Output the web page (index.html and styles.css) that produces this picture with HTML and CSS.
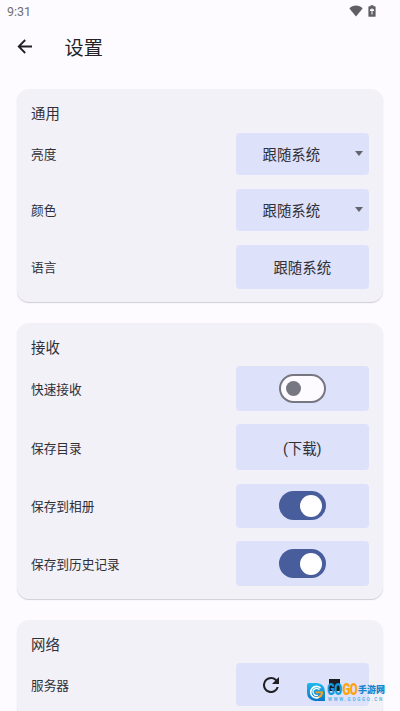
FILE: index.html
```html
<!DOCTYPE html>
<html lang="zh-CN">
<head>
<meta charset="utf-8">
<title>设置</title>
<link rel="stylesheet" href="styles.css">
</head>
<body>
<div class="status">
  <span>9:31</span>
  <div class="status-icons">
    <svg width="14" height="12" viewBox="0 0 14 12"><path d="M7 11.6 0.4 3.4C2.2 1.5 4.5.6 7 .6s4.800.9 6.600 2.800z"/></svg>
    <svg width="8" height="12" viewBox="0 0 8 12"><path fill-rule="evenodd" d="M2.500 1.300V.2h3v1.100h1.500q.6 0 .6.6v9.300q0 .6-.6.6H1q-.6 0-.6-.6V1.900q0-.6.6-.6zM3.500 3.200v1.100H2v1.700h1.500v3.500h1V6H6V4.300H4.500V3.200z"/></svg>
  </div>
</div>
<header class="appbar">
  <svg width="16" height="16" viewBox="0 0 16 16"><path class="line" d="M15 7.500H2M8.200 1 1.700 7.500l6.500 6.500"/></svg>
  <h1>设置</h1>
</header>
<main>
  <section class="card">
    <h2>通用</h2>
    <div class="row select"><span>亮度</span><div class="control"><span>跟随系统</span><i class="caret"></i></div></div>
    <div class="row select"><span>颜色</span><div class="control"><span>跟随系统</span><i class="caret"></i></div></div>
    <div class="row"><span>语言</span><div class="control">跟随系统</div></div>
  </section>
  <section class="card">
    <h2>接收</h2>
    <div class="row"><span>快速接收</span><div class="control"><div class="switch"></div></div></div>
    <div class="row tall"><span>保存目录</span><div class="control">(下载)</div></div>
    <div class="row"><span>保存到相册</span><div class="control"><div class="switch on"></div></div></div>
    <div class="row"><span>保存到历史记录</span><div class="control"><div class="switch on"></div></div></div>
  </section>
  <section class="card">
    <h2>网络</h2>
    <div class="row select"><span>服务器</span><div class="control actions">
      <svg width="16" height="16" viewBox="4 4 16 16"><path d="M17.650 6.350A7.960 7.960 0 0 0 12 4a8 8 0 1 0 7.730 10h-2.080A6 6 0 1 1 12 6c1.660 0 3.140.69 4.220 1.780L13 11h7V4z"/></svg>
      <i class="stop"></i>
    </div></div>
  </section>
</main>
<div class="watermark">
  <svg width="18" height="18" viewBox="0 0 18 18">
    <defs><linearGradient id="blue" x1="0" y1="0" x2="0" y2="1"><stop offset="0" stop-color="#22b8ed"/><stop offset="1" stop-color="#0875c8"/></linearGradient></defs>
    <path fill="url(#blue)" d="M2 0h8q8 1 8 9v9H8Q0 17 0 9V2q0-2 2-2z"/>
    <path d="M13.500 5.200A5.700 5.700 0 1 0 14 12.500" fill="none" stroke="#fff" stroke-width="1.700"/>
    <path d="M12.300 7A3.400 3.400 0 1 0 11 12" fill="none" stroke="#fff" stroke-width="1.300"/>
    <path d="M8.500 9.400H15q0 3.500-3.500 4.600" fill="none" stroke="#ffa313" stroke-width="1.900"/>
  </svg>
  <div class="brand">
    <div class="words">
      <span class="go blue">GO</span>
      <span class="go orange">GO</span>
      <span class="site">手游网</span>
    </div>
    <small>WWW.GOGGO.CN</small>
  </div>
</div>
</body>
</html>
```
FILE: styles.css
```css
* { box-sizing: border-box; }
body {
  margin: 0;
  height: 711px;
  overflow: hidden;
  position: relative;
  background: #fdfbff;
  color: #303036;
  font-family: Roboto, "Noto Sans CJK SC", sans-serif;
}
svg { display: block; flex: none; }
.status {
  height: 22px;
  padding: 1px 24px 0 7px;
  display: flex;
  align-items: center;
  justify-content: space-between;
  color: #707073;
  font-size: 12.500px;
}
.status-icons { display: flex; gap: 5px; fill: #606063; margin-top: -2px; }
.appbar {
  height: 50px;
  padding: 0 17px;
  display: flex;
  align-items: center;
  gap: 31.500px;
}
.line { fill: none; stroke: #202024; stroke-width: 1.800; }
h1, h2 { margin: 0; font-weight: 400; }
h1 { font-size: 19.200px; line-height: 28px; padding-top: 4px; color: #242428; }
main {
  padding: 17px 17px 0;
  display: flex;
  flex-direction: column;
  gap: 20.800px;
}
.card {
  flex: none;
  display: flex;
  flex-direction: column;
  gap: 13.500px;
  padding: 14px 14px 13.200px;
  border-radius: 12px;
  background: #f2f1f8;
  box-shadow: 0 1px 1px #d0ced7;
}
h2 { height: 16px; line-height: 23px; font-size: 14.400px; }
.row {
  height: 44.400px;
  display: flex;
  align-items: center;
  justify-content: space-between;
  font-size: 12.700px;
}
.row.select { height: 42.500px; }
.row.tall { height: 45.800px; }
.control {
  width: 133.500px;
  height: 100%;
  border-radius: 4px;
  background: #dde1fa;
  display: flex;
  align-items: center;
  justify-content: center;
  font-size: 14.400px;
}
.select .control { justify-content: space-between; padding: 0 6px 0 27px; }
.caret { border: 4.500px solid transparent; border-top-width: 5px; border-top-color: #64646a; border-bottom: 0; }
.switch {
  width: 47px;
  height: 29px;
  border: 2px solid #777782;
  border-radius: 15px;
  background: #fdfbff;
  display: flex;
  align-items: center;
  padding: 0 5px;
}
.switch::before { content: ""; width: 15px; height: 15px; border-radius: 50%; background: #777782; }
.switch.on { background: #485d9b; border: 0; justify-content: flex-end; padding: 0 4px; }
.switch.on::before { width: 22px; height: 22px; background: #fff; }
.select .actions { padding: 0 29px 0 27px; fill: #202024; }
.stop { width: 11.500px; height: 12px; background: #1c1c22; }
.watermark {
  position: absolute;
  left: 307px;
  top: 683px;
  display: flex;
  gap: 2px;
}
.brand { width: 58px; }
.words {
  height: 14px;
  display: flex;
  align-items: center;
  white-space: nowrap;
}
.go {
  width: 15.500px;
  font: 900 11.500px/11px Roboto, sans-serif;
  letter-spacing: -.6px;
  transform: scaleY(1.400);
}
.blue { color: #119bdd; }
.orange { color: #ffa20a; }
.site { font: 900 9px/14px "Noto Sans CJK SC", sans-serif; color: #1686cb; }
.brand small {
  display: block;
  margin: 1px 0 0 1px;
  font: 700 4.500px/4px Roboto, sans-serif;
  letter-spacing: 1.700px;
  white-space: nowrap;
  color: #55b6e5;
}
```
